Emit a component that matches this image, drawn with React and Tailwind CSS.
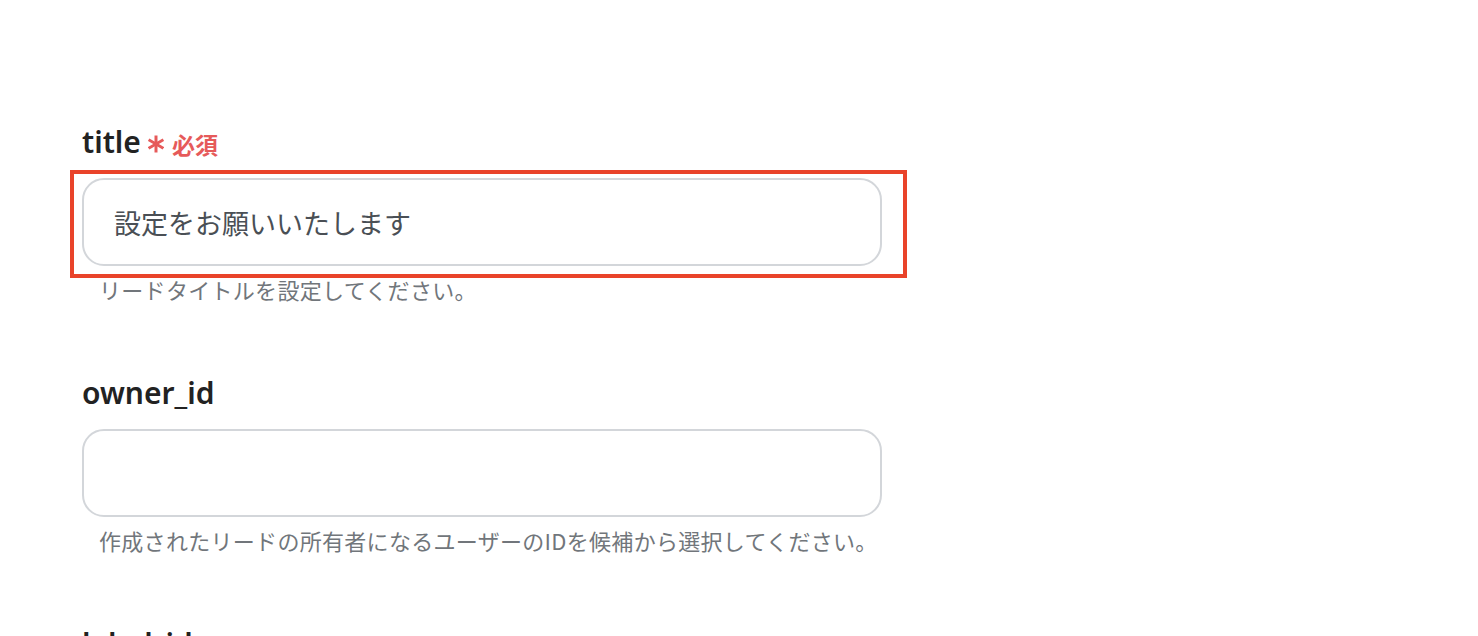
import React, { useState } from "react";

const fields = [
  {
    name: "title",
    required: true,
    value: "設定をお願いいたします",
    help: "リードタイトルを設定してください。",
    highlight: true,
  },
  {
    name: "owner_id",
    required: false,
    value: "",
    help: "作成されたリードの所有者になるユーザーのIDを候補から選択してください。",
  },
  {
    name: "label_ids",
    required: false,
    value: "",
    help: "リードに付与するラベルのIDを候補から選択してください。",
  },
];

const Asterisk = () => (
  <svg width="16" height="18" viewBox="0 0 16 18" className="mt-[4px]">
    <g stroke="#e65a5a" strokeWidth="3" strokeLinecap="butt">
      <line x1="8" y1="0.5" x2="8" y2="17.5" />
      <line x1="0.6" y1="4.7" x2="15.4" y2="13.3" />
      <line x1="0.6" y1="13.3" x2="15.4" y2="4.7" />
    </g>
  </svg>
);

const Field = ({ field, value, onChange }) => {
  return (
    <div className="flex flex-col mb-[71px]">
      <div className="flex items-center h-[36px]">
        <span className="text-[30px] font-semibold text-[#222222] leading-[36px] font-['Noto_Sans','Noto_Sans_CJK_JP',sans-serif]">
          {field.name}
        </span>
        {field.required && (
          <span className="flex items-center ml-[7px] text-[#e65a5a] font-bold font-['Noto_Sans_CJK_JP',sans-serif]">
            <Asterisk />
            <span className="text-[23px] leading-none ml-[8px] mt-[4px]">必須</span>
          </span>
        )}
      </div>

      <div className="relative mt-[18px] w-[800px]">
        <input
          className="w-full h-[88px] rounded-[22px] border-2 border-[#d3d6da] bg-white pl-[30px] pr-4 text-[27px] text-[#4a4f55] outline-none font-['Noto_Sans_CJK_JP',sans-serif]"
          type="text"
          name={field.name}
          value={value}
          onChange={(e) => onChange(field.name, e.target.value)}
        />
        {field.highlight && (
          <div className="absolute left-[-12px] top-[-8px] right-[-25px] bottom-[-12px] border-[4px] border-[#e9432a] pointer-events-none"></div>
        )}
      </div>

      <p className="mt-[8px] ml-[17px] h-[30px] leading-[30px] text-[22px] tracking-[0.3px] text-[#71767b] font-['Noto_Sans_CJK_JP',sans-serif]">
        {field.help}
      </p>
    </div>
  );
};

const App = () => {
  const [data, setData] = useState({
    title: "設定をお願いいたします",
    owner_id: "",
    label_ids: "",
  });

  const handleChange = (name, v) => setData({ ...data, [name]: v });

  return (
    <div className="h-[636px] overflow-hidden bg-white pl-[82px] pt-[124px]">
      <form onSubmit={(e) => e.preventDefault()}>
        {fields.map((f) => (
          <Field key={f.name} field={f} value={data[f.name]} onChange={handleChange} />
        ))}
      </form>
    </div>
  );
};

export default App;
